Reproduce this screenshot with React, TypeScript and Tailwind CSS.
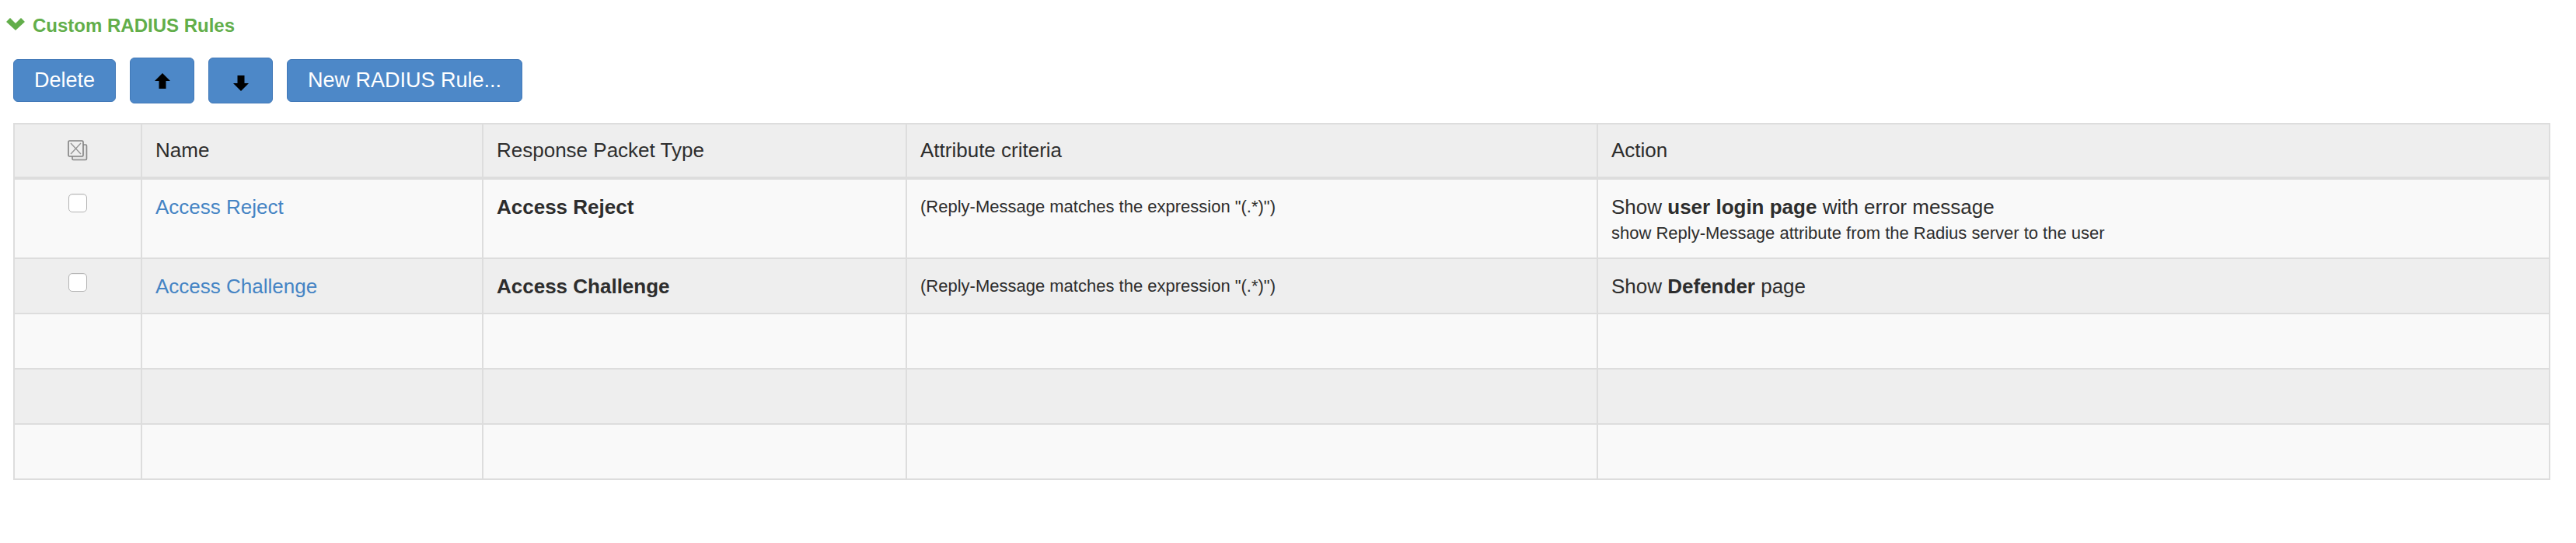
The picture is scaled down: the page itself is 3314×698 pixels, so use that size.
import type { ReactNode } from 'react';

type Rule = {
  name: string;
  packetType: string;
  criteria: string;
  action: ReactNode;
  note?: string;
};

const rules: Rule[] = [
  {
    name: 'Access Reject',
    packetType: 'Access Reject',
    criteria: '(Reply-Message matches the expression "(.*)")',
    action: (
      <>
        Show <b className="font-bold">user login page</b> with error message
      </>
    ),
    note: 'show Reply-Message attribute from the Radius server to the user',
  },
  {
    name: 'Access Challenge',
    packetType: 'Access Challenge',
    criteria: '(Reply-Message matches the expression "(.*)")',
    action: (
      <>
        Show <b className="font-bold">Defender</b> page
      </>
    ),
  },
];

const EMPTY_ROWS = 3;

function ChevronDown() {
  return (
    <svg width="24" height="16" viewBox="0 0 24 16" className="-translate-y-[2px]">
      <polygon points="0,5 5,0 12,7 19,0 24,5 12,16" fill="#62ae4a" />
    </svg>
  );
}

function ArrowIcon({ down = false }: { down?: boolean }) {
  return (
    <svg
      width="20"
      height="20"
      viewBox="0 0 20 20"
      className={down ? 'rotate-180 translate-y-[3px]' : ''}
    >
      <polygon points="10,0 20,10 14.5,10 14.5,20 5.5,20 5.5,10 0,10" fill="#000" />
    </svg>
  );
}

// header "toggle all" glyph: boxed cross with a shadow box behind it
function SelectAllIcon() {
  return (
    <svg width="26" height="27" viewBox="0 0 26 27" className="mx-auto">
      <rect x="6" y="6" width="18.5" height="19.5" rx="1.5" fill="#e6e6e6" stroke="#8a8a8a" strokeWidth="1.6" />
      <rect x="1" y="1" width="19" height="20" rx="1.5" fill="#efefef" stroke="#808080" strokeWidth="1.6" />
      <path d="M4 4 L17 18 M17 4 L4 18" stroke="#959595" strokeWidth="1.4" />
    </svg>
  );
}

function Checkbox() {
  return (
    <span className="mx-auto -mt-px block h-[24px] w-[24px] rounded-[5px] border border-[#b4b4b4] bg-white shadow-[inset_0_1px_1px_rgba(0,0,0,0.06)]" />
  );
}

const btn =
  'flex h-[55px] items-center justify-center rounded-[6px] border border-[#4279b8] bg-[#4d88c8] px-[26px] text-[27px] text-white';
const iconBtn =
  'flex h-[59px] w-[83px] items-center justify-center rounded-[6px] border border-[#4279b8] bg-[#4d88c8]';

const th = 'border-2 border-b-4 border-[#dddddd] px-[17px] py-[16px] text-left align-middle font-normal leading-[35px]';
const td = 'border-2 border-[#dddddd] px-[17px] pt-[18px] pb-[16px] align-top leading-[35px]';

export default function App() {
  return (
    <div className="min-h-[698px] bg-white pt-[17px] font-['Liberation_Sans',Arial,sans-serif] text-[26px] text-[#2d2d2d]">
      {/* section header */}
      <div className="flex items-center gap-[10px] pl-[8px] text-[24px] leading-[32px] font-bold text-[#62ae4a]">
        <ChevronDown />
        <span>Custom RADIUS Rules</span>
      </div>

      <div className="pl-[17px] pr-[33px]">
        {/* toolbar */}
        <div className="mt-[25px] flex h-[59px] items-center gap-[18px]">
          <button className={btn}>Delete</button>
          <button className={iconBtn}>
            <ArrowIcon />
          </button>
          <button className={iconBtn}>
            <ArrowIcon down />
          </button>
          <button className={btn}>New RADIUS Rule...</button>
        </div>

        {/* rules table */}
        <table className="mt-[25px] w-full table-fixed border-collapse">
          <colgroup>
            <col className="w-[164px]" />
            <col className="w-[439px]" />
            <col className="w-[545px]" />
            <col className="w-[889px]" />
            <col />
          </colgroup>
          <thead>
            <tr className="bg-[#eeeeee]">
              <th className={th}>
                <SelectAllIcon />
              </th>
              <th className={th}>Name</th>
              <th className={th}>Response Packet Type</th>
              <th className={th}>Attribute criteria</th>
              <th className={th}>Action</th>
            </tr>
          </thead>
          <tbody>
            {rules.map((rule, i) => (
              <tr key={rule.name} className={i % 2 === 0 ? 'bg-[#f9f9f9]' : 'bg-[#eeeeee]'}>
                <td className={td}>
                  <div className="flex h-[35px] items-start pt-px">
                    <Checkbox />
                  </div>
                </td>
                <td className={td}>
                  <a href="#" className="text-[#4584c4]">
                    {rule.name}
                  </a>
                </td>
                <td className={`${td} font-bold`}>{rule.packetType}</td>
                <td className={td}>
                  <span className="block text-[22px] leading-[33px]">{rule.criteria}</span>
                </td>
                <td className={td}>
                  <div>{rule.action}</div>
                  {rule.note && <div className="text-[22px] leading-[31px]">{rule.note}</div>}
                </td>
              </tr>
            ))}
            {Array.from({ length: EMPTY_ROWS }).map((_, i) => (
              <tr
                key={`empty-${i}`}
                className={(rules.length + i) % 2 === 0 ? 'bg-[#f9f9f9]' : 'bg-[#eeeeee]'}
              >
                {Array.from({ length: 5 }).map((__, c) => (
                  <td key={c} className={td}>
                    {'\u00a0'}
                  </td>
                ))}
              </tr>
            ))}
          </tbody>
        </table>
      </div>
    </div>
  );
}
